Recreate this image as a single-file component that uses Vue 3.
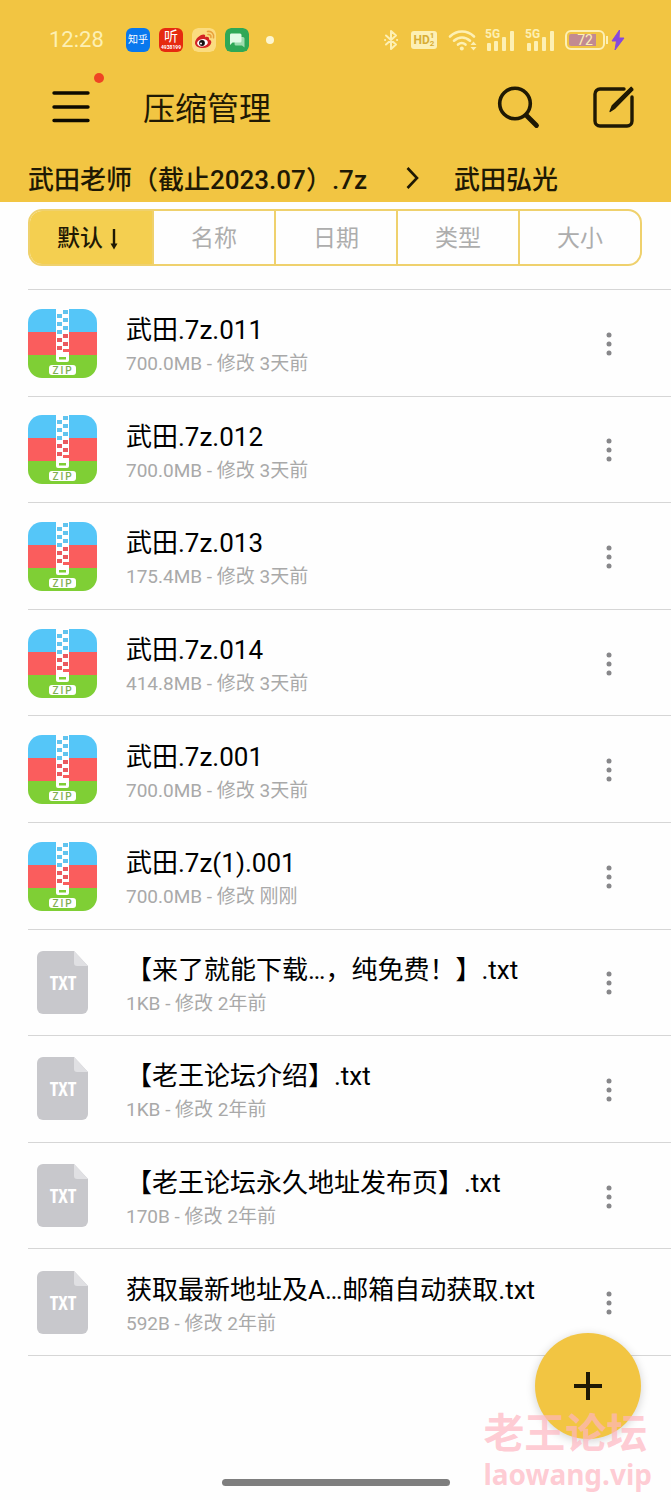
<script setup>
import { ref } from 'vue'

const tabs = ['默认', '名称', '日期', '类型', '大小']
const active = ref(0)

const files = [
  { type: 'zip', name: '武田.7z.011', meta: '700.0MB - 修改 3天前' },
  { type: 'zip', name: '武田.7z.012', meta: '700.0MB - 修改 3天前' },
  { type: 'zip', name: '武田.7z.013', meta: '175.4MB - 修改 3天前' },
  { type: 'zip', name: '武田.7z.014', meta: '414.8MB - 修改 3天前' },
  { type: 'zip', name: '武田.7z.001', meta: '700.0MB - 修改 3天前' },
  { type: 'zip', name: '武田.7z(1).001', meta: '700.0MB - 修改 刚刚' },
  { type: 'txt', name: '【来了就能下载…，纯免费！】.txt', meta: '1KB - 修改 2年前' },
  { type: 'txt', name: '【老王论坛介绍】.txt', meta: '1KB - 修改 2年前' },
  { type: 'txt', name: '【老王论坛永久地址发布页】.txt', meta: '170B - 修改 2年前' },
  { type: 'txt', name: '获取最新地址及A…邮箱自动获取.txt', meta: '592B - 修改 2年前' },
]
const teeth = [0, 1, 2, 3, 4, 5, 6, 7, 8, 9]
</script>

<template>
  <div class="page">
    <header class="header">
      <div class="status">
        <time class="clock">12:28</time>
        <div class="apps">
          <span class="app zhihu">知乎</span>
          <span class="app ting"><b>听</b><small>4938199</small></span>
          <svg class="app" viewBox="0 0 24 24" aria-hidden="true">
            <rect width="24" height="24" rx="6" fill="#fbdc80" />
            <path d="M3 15c0-4 5-8.500 8.500-8.500 2 0 2 1.500 1.500 2.700 2-.8 4.500-.6 4 2.300 5 1.500 1.500 8.500-6 8.500-4.500 0-8-2-8-5z" fill="#d32424" />
            <ellipse cx="10.500" cy="14.800" rx="5.400" ry="3.700" fill="#fff" transform="rotate(-8 10.500 14.800)" />
            <circle cx="10" cy="15" r="2.900" fill="#151010" />
            <circle cx="9" cy="15.600" r="1" fill="#fff" />
            <path d="M15.500 3.500c4-.8 7 2.500 6 6.300M16 6.500c2-.3 3.300 1 2.900 3" fill="none" stroke="#e9a13b" stroke-width="1.600" stroke-linecap="round" />
          </svg>
          <svg class="app" viewBox="0 0 24 24" aria-hidden="true">
            <rect width="24" height="24" rx="6" fill="#2fa856" />
            <path d="M10 9h8a1.500 1.500 0 0 1 1.500 1.500V19.500l-2.500-2h-6A1.500 1.500 0 0 1 9.500 16z" fill="#9fdcae" />
            <path d="M6 5.500h9A1.500 1.500 0 0 1 16.500 7v6A1.500 1.500 0 0 1 15 14.500H7.500L5 17V7a1.500 1.500 0 0 1 1-1.500z" fill="#e2fbe5" />
          </svg>
          <i class="dot"></i>
        </div>
        <div class="signals">
          <svg width="16" height="22" viewBox="0 0 16 22" fill="none" stroke="#fdf0b4" stroke-width="2" stroke-linejoin="round" stroke-linecap="round" aria-hidden="true">
            <path d="M3 6.500l10 9-5 4.500V2l5 4.500-10 9" /><path d="M2 11h.2M14 11h.2" />
          </svg>
          <span class="hd">HD<span><i>1</i><i>2</i></span></span>
          <svg class="wifi" width="30" height="22" viewBox="0 0 30 22" aria-hidden="true">
            <g fill="none" stroke="#fdf0b4" stroke-width="2.600" stroke-linecap="round">
              <path d="M2 7.500c7-6.600 17-6.600 24 0M6 11.700c4.800-4.300 11.200-4.300 16 0M10 15.600c2.500-2.100 5-2.100 7.500 0" />
            </g>
            <circle cx="13.800" cy="19.500" r="2" fill="#fdf0b4" />
            <path d="M22.500 16l3-3.500 3 3.500zM22.500 18l3 3.500 3-3.500z" fill="#fdf0b4" />
          </svg>
          <span v-for="n in 2" :key="n" class="cell">
            <span>5G</span>
            <svg width="30" height="22" viewBox="0 0 30 22" fill="#fdf0b4" aria-hidden="true">
              <rect x="2" y="14" width="4" height="8" rx="1" /><rect x="9" y="12" width="4" height="10" rx="1" />
              <rect x="17" y="8" width="4" height="14" rx="1" /><rect x="25" y="2" width="4" height="20" rx="1" />
            </svg>
          </span>
          <span class="battery"><span>72</span></span>
          <svg class="bolt" width="14" height="22" viewBox="0 0 14 22" aria-hidden="true"><path d="M8.500 1L1 12h4.500L4 21l9-12H8z" fill="#8649dc" stroke="#8649dc" stroke-linejoin="round" /></svg>
        </div>
      </div>

      <div class="bar">
        <button class="icon menu" aria-label="菜单">
          <svg width="40" height="34" viewBox="0 0 40 34" stroke="#0d0a00" stroke-width="3.400" stroke-linecap="round" aria-hidden="true"><path d="M3 3h34M3 17h34M3 30.500h34" /></svg>
          <i class="badge"></i>
        </button>
        <h1>压缩管理</h1>
        <button class="icon" aria-label="搜索">
          <svg width="44" height="44" viewBox="0 0 44 44" fill="none" stroke="#1f1904" stroke-linecap="round" aria-hidden="true"><circle cx="19" cy="18.500" r="15.300" stroke-width="3.600" /><path d="M30.500 30.500L40.500 40.500" stroke-width="4.800" /></svg>
        </button>
        <button class="icon edit" aria-label="编辑">
          <svg width="42" height="42" viewBox="0 0 42 42" fill="none" stroke="#1f1904" stroke-width="3.400" stroke-linecap="round" stroke-linejoin="round" aria-hidden="true">
            <path d="M31 3H7a5 5 0 0 0-5 5v27a5 5 0 0 0 5 5h27a5 5 0 0 0 5-5V11" />
            <path d="M38.200 1.200c1.200.8 2 1.800 1.800 2.700L22 22.200l-5 3.300 2.200-5.700z" fill="#1f1904" stroke-width="1.200" />
          </svg>
        </button>
      </div>

      <nav class="crumbs" aria-label="路径">
        <a href="#">武田老师（截止2023.07）.7z</a>
        <svg width="14" height="24" viewBox="0 0 14 24" fill="none" stroke="#1f1904" stroke-width="2.600" aria-hidden="true"><path d="M1.500 2l9.500 10-9.500 10" /></svg>
        <a href="#">武田弘光</a>
      </nav>
    </header>

    <main>
      <div class="tabs">
        <button v-for="(tab, i) in tabs" :key="tab" :class="{ active: active === i }" :aria-pressed="active === i" @click="active = i">
          {{ tab }}<svg v-if="active === i" width="10" height="22" viewBox="0 0 10 22" aria-hidden="true"><path d="M5 1v17" stroke="#1f1904" stroke-width="2.400" /><path d="M1.500 15.500h7L5 21.500z" fill="#1f1904" /></svg>
        </button>
      </div>

      <ul class="files">
        <li v-for="file in files" :key="file.name">
          <div class="thumb">
            <svg v-if="file.type === 'zip'" width="69" height="69" viewBox="0 0 69 69" role="img" aria-label="压缩包">
              <path d="M0 23V14A14 14 0 0 1 14 0h41a14 14 0 0 1 14 14v9z" fill="#55c6f8" />
              <path d="M0 23h69v23H0z" fill="#fa5d5d" />
              <path d="M0 46h69v9a14 14 0 0 1-14 14H14A14 14 0 0 1 0 55z" fill="#7fcf35" />
              <path d="M28 0h13v43H28z" fill="#fff" />
              <rect v-for="t in teeth" :key="t" :x="t % 2 ? 29 : 35" :y="t * 4 + 1" width="5" height="4" :fill="t < 6 ? '#62c4ee' : '#ea5a60'" />
              <path d="M35 40h6v4h-6z" fill="#fa5d5d" />
              <path d="M28 43h13v8a2 2 0 0 1-2 2h-9a2 2 0 0 1-2-2z" fill="#fff" />
              <rect x="31" y="48" width="7" height="2.500" fill="#7fcf35" />
              <rect x="21" y="56" width="27" height="10" rx="3" fill="#fff" />
              <text x="35" y="65" text-anchor="middle" class="ziptext">ZIP</text>
            </svg>
            <svg v-else width="52" height="64" viewBox="0 0 52 64" role="img" aria-label="文本">
              <path d="M6 0h31l14 15v42a6 6 0 0 1-6 6H6a6 6 0 0 1-6-6V6a6 6 0 0 1 6-6z" fill="#c8c8cc" />
              <path d="M37 0l14 15H40a3 3 0 0 1-3-3z" fill="#e0e0e3" />
              <text x="26" y="39" text-anchor="middle" class="txttext">TXT</text>
            </svg>
          </div>
          <div class="info">
            <div class="name">{{ file.name }}</div>
            <div class="meta">{{ file.meta }}</div>
          </div>
          <button class="more" aria-label="更多">
            <svg width="6" height="24" viewBox="0 0 6 24" fill="#87878a" aria-hidden="true"><circle cx="3" cy="3" r="2.500" /><circle cx="3" cy="12" r="2.500" /><circle cx="3" cy="21" r="2.500" /></svg>
          </button>
        </li>
      </ul>
    </main>

    <button class="fab" aria-label="添加">
      <svg width="28" height="28" viewBox="0 0 28 28" stroke="#1f1904" stroke-width="4" aria-hidden="true"><path d="M14 0v28M0 14h28" /></svg>
    </button>
    <div class="watermark"><strong>老王论坛</strong><span>laowang.vip</span></div>
    <div class="home"></div>
  </div>
</template>

<style>
body { margin: 0; background: #fefefe; }
</style>

<style scoped>
.page { position: relative; box-sizing: border-box; min-height: 100vh; overflow: hidden; background: #fefefe; color: #000; font-family: Roboto, "Noto Sans CJK SC", sans-serif; }
button { margin: 0; padding: 0; border: 0; background: none; font: inherit; color: inherit; cursor: pointer; }
svg { display: block; flex: none; }
i { font-style: normal; }
.header { display: flex; flex-direction: column; background: #f2c542; color: #1f1904; }
.status { display: flex; align-items: center; height: 80px; padding: 0 46px 0 49px; color: #fdf0b4; }
.clock { width: 77px; font-size: 22px; line-height: 24px; }
.apps { display: flex; align-items: center; gap: 9px; }
.app { box-sizing: border-box; width: 24px; height: 24px; border-radius: 6px; color: #fff; }
.zhihu { background: #0878ee; font-size: 10px; line-height: 23px; text-align: center; }
.ting { display: flex; flex-direction: column; align-items: center; background: #e62a10; }
.ting b { font-size: 14px; line-height: 16px; font-weight: 400; }
.ting small { font-size: 5px; line-height: 6px; font-weight: 700; }
.dot { width: 8px; height: 8px; margin-left: 8px; border-radius: 50%; background: #fdf6d0; }
.signals { display: flex; align-items: center; margin-left: auto; }
.hd { display: flex; align-items: center; justify-content: center; width: 26px; height: 18px; margin-left: 12px; border-radius: 3px; background: #fdf0b4; color: #d8ad35; font-size: 12px; line-height: 18px; font-weight: 700; }
.hd span { display: flex; flex-direction: column; font-size: 8px; line-height: 8px; }
.wifi { margin: 0 7px 0 11px; }
.cell { position: relative; margin-right: 10px; }
.cell span { position: absolute; left: 0; top: 0; font-size: 12px; line-height: 10px; font-weight: 700; }
.battery { position: relative; box-sizing: border-box; width: 40px; height: 20px; padding: 2px; border: 2px solid #fdf0b4; border-radius: 6px; background: linear-gradient(90deg, #c18a91 27px, transparent 27px) content-box; font-size: 14px; line-height: 16px; text-align: center; }
.battery span { display: block; height: 12px; line-height: 13px; }
.battery::after { content: ""; position: absolute; right: -5px; top: 4px; width: 2px; height: 8px; background: #fdf0b4; }
.bolt { margin-left: 6px; }
.bar { display: flex; align-items: center; height: 54px; padding: 0 36px 0 51px; }
.icon { position: relative; flex: none; }
.badge { position: absolute; right: -13px; top: -17px; width: 10px; height: 10px; border-radius: 50%; background: #ef4423; }
h1 { flex: 1; margin: 0 0 0 52px; padding-top: 4px; font-size: 32px; line-height: 50px; font-weight: 400; }
.edit { margin-left: 53px; }
.crumbs { display: flex; align-items: center; height: 68px; box-sizing: border-box; padding: 24px 28px 0; font-size: 26px; line-height: 40px; font-weight: 500; }
.crumbs a { color: inherit; text-decoration: none; white-space: nowrap; }
.crumbs svg { margin: 0 34px 4px 39px; }
.tabs { display: grid; grid-template-columns: repeat(5, 1fr); box-sizing: border-box; height: 57px; margin: 7px 29px 23px 28px; border: 2px solid #efd16d; border-radius: 14px; overflow: hidden; }
.tabs button { display: flex; align-items: center; justify-content: center; gap: 6px; padding-top: 3px; border-left: 2px solid #efd16d; font-size: 23px; line-height: 34px; color: #adadad; }
.tabs button:first-child { border-left: 0; }
.tabs .active { padding-right: 6px; background: #f4cf50; color: #1f1904; font-weight: 500; }
.files { display: grid; grid-auto-rows: 1fr; min-height: 1067px; margin: 0 0 144px 28px; padding: 0; list-style: none; border-top: 1px solid #d6d6d6; box-sizing: border-box; }
.files li { display: flex; align-items: center; min-width: 0; border-bottom: 1px solid #d6d6d6; }
.thumb { display: flex; justify-content: center; flex: none; width: 69px; padding-top: 1px; }
.info { flex: 1; min-width: 0; margin-left: 29px; padding-top: 5px; }
.name { overflow: hidden; font-size: 26px; line-height: 38px; white-space: nowrap; }
.meta { color: #a9a9a9; font-size: 19px; line-height: 30px; }
.more { display: flex; justify-content: center; width: 30px; margin-right: 47px; padding: 12px 0 10px; }
.ziptext { fill: #7fae52; font: 500 10px Roboto, sans-serif; letter-spacing: 2px; }
.txttext { fill: #fff; font: 700 20px "Liberation Sans Narrow", "Open Sans Condensed", "DejaVu Sans Condensed", sans-serif; }
.fab { position: absolute; right: 30px; bottom: 61px; display: flex; align-items: center; justify-content: center; width: 106px; height: 106px; border-radius: 50%; background: #f2c542; box-shadow: 0 2px 10px rgba(0, 0, 0, 0.18); }
.watermark { position: absolute; right: 19px; bottom: 9px; display: flex; flex-direction: column; color: rgba(255, 182, 193, 0.7); pointer-events: none; }
.watermark strong { font-size: 41px; line-height: 46px; }
.watermark span { font: 700 28px/34px "Noto Sans", sans-serif; }
.home { position: absolute; left: 50%; bottom: 14px; width: 228px; height: 7px; margin-left: -114px; border-radius: 4px; background: #7e7e7e; }
</style>
